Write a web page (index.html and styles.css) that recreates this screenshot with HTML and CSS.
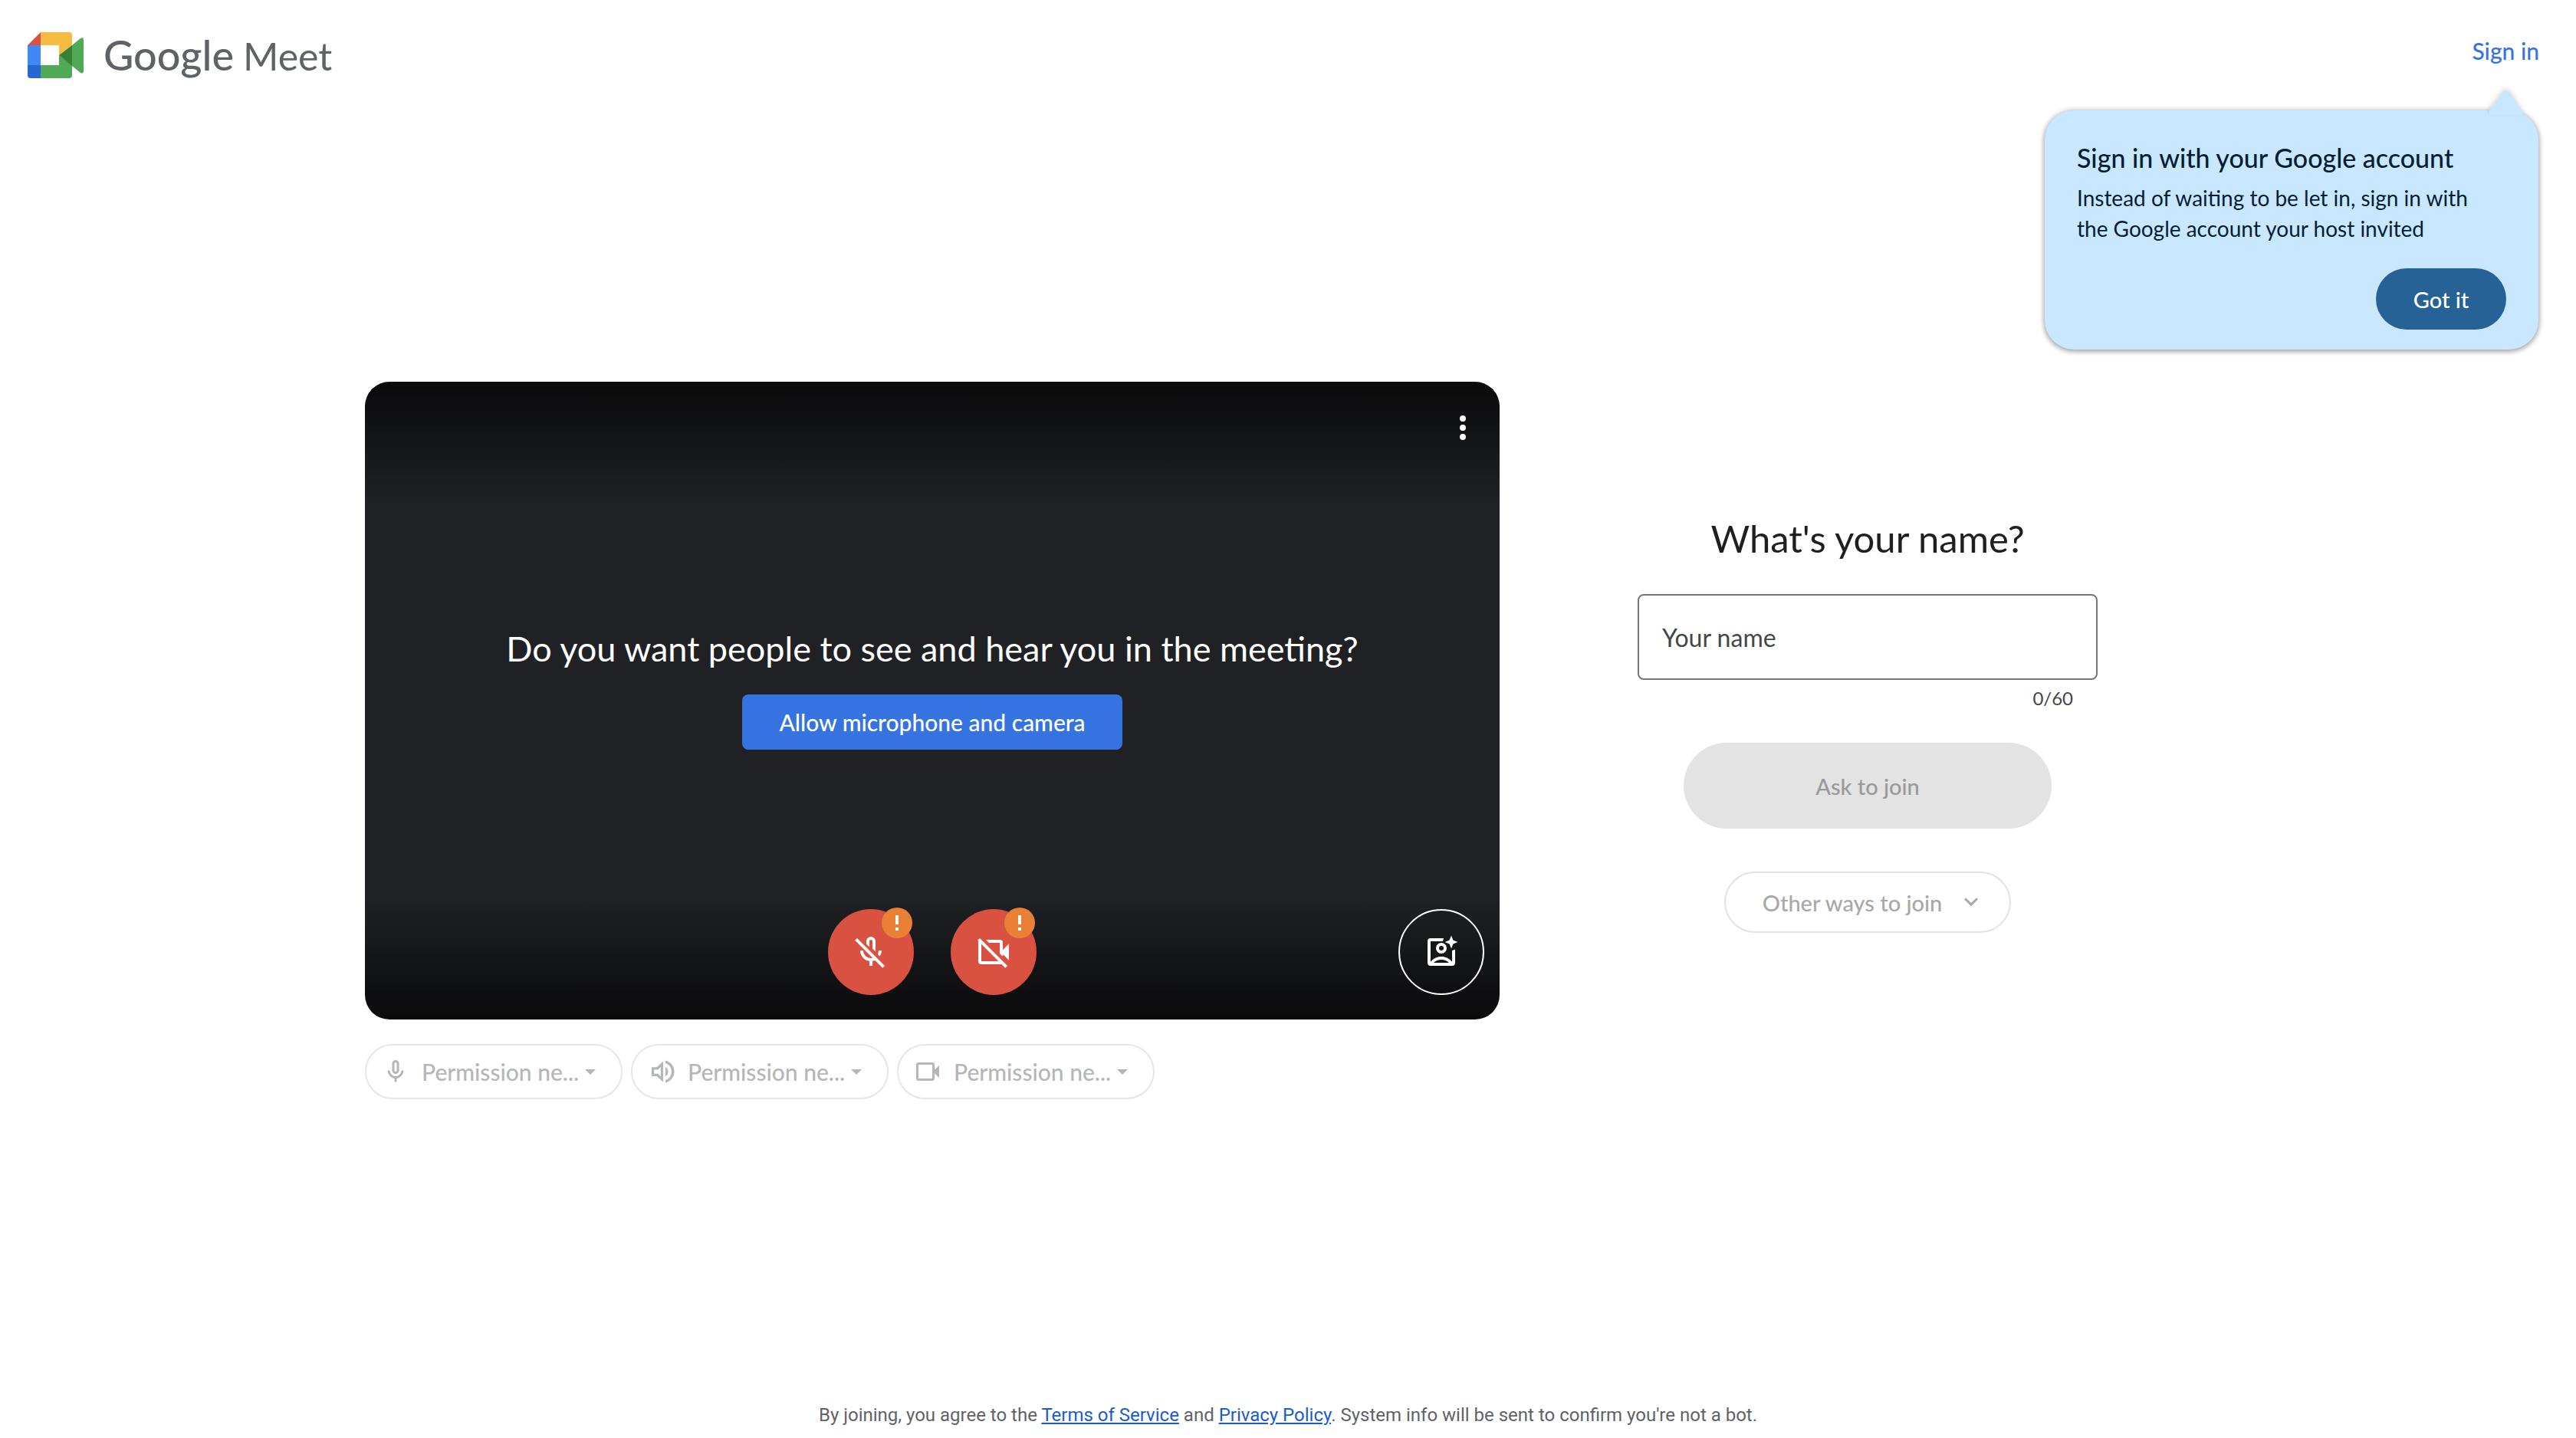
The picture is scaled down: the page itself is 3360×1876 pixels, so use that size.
FILE: index.html
```html
<!DOCTYPE html>
<html lang="en">
<head>
<meta charset="utf-8">
<meta name="viewport" content="width=device-width, initial-scale=1">
<title>Google Meet</title>
<link rel="stylesheet" href="styles.css">
</head>
<body>
<header class="header">
  <div class="logo">
    <svg class="logo-mark" viewBox="0 0 73 60" aria-hidden="true">
      <path fill="#d95140" d="M0 17 17 0v17z"/>
      <path fill="#f6bc42" d="M17 0h37a4 4 0 0 1 4 4v13L41 30V17H17z"/>
      <path fill="#4087f7" d="M0 17h17v26H0z"/>
      <path fill="#2467d3" d="M0 43h17v17H4a4 4 0 0 1-4-4z"/>
      <path fill="#4fa955" d="M17 43h24V30l17 13v13a4 4 0 0 1-4 4H17z"/>
      <path fill="#4fa955" d="M58 17 69 8q4-2 4 2v40q0 5-4 3l-11-9z"/>
      <path fill="#387f38" d="M41 30 58 17v27z"/>
    </svg>
    <div class="wordmark"><span class="brand">Google</span> <span class="product">Meet</span></div>
  </div>
  <a class="sign-in" href="#">Sign in</a>
  <div class="tip" role="dialog" aria-labelledby="tip-title">
    <svg class="tip-arrow" viewBox="0 0 44 32" aria-hidden="true"><path d="M0 26 15 5q7-9 13 0l15 23v4H0z"/></svg>
    <h2 class="tip-title" id="tip-title">Sign in with your Google account</h2>
    <p class="tip-text">Instead of waiting to be let in, sign in with the Google account your host invited</p>
    <button class="tip-button" type="button">Got it</button>
  </div>
</header>

<main class="main">
  <section class="preview">
    <div class="stage">
      <div class="stage-top">
        <button class="more" type="button" aria-label="More options">
          <svg class="icon" viewBox="0 0 24 24"><circle cx="12" cy="6" r="2"/><circle cx="12" cy="12" r="2"/><circle cx="12" cy="18" r="2"/></svg>
        </button>
      </div>
      <div class="stage-prompt">
        <p class="question">Do you want people to see and hear you in the meeting?</p>
        <button class="allow" type="button">Allow microphone and camera</button>
      </div>
      <div class="stage-controls">
        <div class="toggles">
          <button class="round off" type="button" aria-label="Turn on microphone">
            <svg class="icon" viewBox="0 0 24 24">
              <path d="M9 6.8V5a3 3 0 0 1 6 0v6.8l-2-2V5a1 1 0 0 0-2 0v3.8z"/>
              <path d="M17 11h2c0 1.4-.5 2.7-1.5 3.8l-1-1.6c.3-.7.5-1.4.5-2.2z"/>
              <path d="M5 11h2a5 5 0 0 0 7.2 4.5l1.5 1.5a7 7 0 0 1-2.7.9V21h-2v-3.1A7 7 0 0 1 5 11z"/>
              <path class="slash" d="M2.3 3.7l18 18"/>
            </svg>
            <svg class="badge" viewBox="0 0 40 40"><circle cx="20" cy="20" r="20"/><path d="M18 10h4v12h-4zM18 26h4v4h-4z"/></svg>
          </button>
          <button class="round off" type="button" aria-label="Turn on camera">
            <svg class="icon" viewBox="0 0 24 24">
              <path d="M7 4h9a2 2 0 0 1 2 2v4.600l4-4v10.800l-3.600-3.600-.6 1-1.800-1.800V6H9z"/>
              <path d="M2 5l2-.4V18h12l2 1.400a2 2 0 0 1-1.500.6H4a2 2 0 0 1-2-2z"/>
              <path class="slash" d="M2.3 3.7l18 18"/>
            </svg>
            <svg class="badge" viewBox="0 0 40 40"><circle cx="20" cy="20" r="20"/><path d="M18 10h4v12h-4zM18 26h4v4h-4z"/></svg>
          </button>
        </div>
        <button class="round effects" type="button" aria-label="Apply visual effects">
          <svg class="icon" viewBox="0 0 24 24">
            <path d="M13.500 3H5a2 2 0 0 0-2 2v14a2 2 0 0 0 2 2h14a2 2 0 0 0 2-2v-8.600l-2 .6v7.400C17.300 16.300 14.800 15 12 15s-5.300 1.300-7 3.400V5h8zM7 19c1.300-1.200 3-2 5-2s3.700.8 5 2z"/>
            <path fill-rule="evenodd" d="M12 6a3.500 3.500 0 1 0 0 7 3.500 3.500 0 0 0 0-7zm0 2a1.500 1.500 0 1 1 0 3 1.500 1.500 0 0 1 0-3z"/>
            <path d="M18.500 1.300l1.200 3 3 1.200-3 1.200-1.200 3-1.200-3-3-1.200 3-1.200z"/>
          </svg>
        </button>
      </div>
    </div>
    <div class="devices">
      <button class="chip" type="button" disabled>
        <svg class="chip-icon" viewBox="0 0 24 24"><path d="M12 14c1.660 0 3-1.340 3-3V5a3 3 0 0 0-6 0v6c0 1.660 1.340 3 3 3zM11 5a1 1 0 0 1 2 0v6a1 1 0 0 1-2 0zM17 11a5 5 0 0 1-10 0H5a7 7 0 0 0 6 6.920V21h2v-3.080A7 7 0 0 0 19 11z"/></svg>
        <span>Permission ne...</span>
        <svg class="caret" viewBox="0 0 14 7"><path d="M0 0h14L7 7z"/></svg>
      </button>
      <button class="chip" type="button" disabled>
        <svg class="chip-icon" viewBox="0 0 24 24"><path fill-rule="evenodd" d="M3.300 8.200v7.800h4.600l5.400 5.200V3L7.900 8.200zM11.200 8v8.200L8.800 13.900H5.400v-3.600h3.400z"/><path d="M15.300 7.800a5 5 0 0 1 0 8.500zM15.300 2.400a9.900 9.900 0 0 1 0 19.300v-2.300a7.700 7.700 0 0 0 0-14.700z"/></svg>
        <span>Permission ne...</span>
        <svg class="caret" viewBox="0 0 14 7"><path d="M0 0h14L7 7z"/></svg>
      </button>
      <button class="chip" type="button" disabled>
        <svg class="chip-icon" viewBox="0 0 24 24"><path d="M18 10.500V6a2 2 0 0 0-2-2H4a2 2 0 0 0-2 2v12a2 2 0 0 0 2 2h12a2 2 0 0 0 2-2v-4.500l4 4v-11zM16 18H4V6h12z"/></svg>
        <span>Permission ne...</span>
        <svg class="caret" viewBox="0 0 14 7"><path d="M0 0h14L7 7z"/></svg>
      </button>
    </div>
  </section>

  <form class="join">
    <h1 class="join-title"><label for="name">What's your name?</label></h1>
    <input class="name" id="name" type="text" maxlength="60" placeholder="Your name">
    <p class="counter">0/60</p>
    <button class="ask" type="submit" disabled>Ask to join</button>
    <button class="other" type="button" disabled>
      <span>Other ways to join</span>
      <svg class="chevron" viewBox="0 0 24 24"><path d="M6.700 8.800 12 14.100l5.300-5.300"/></svg>
    </button>
  </form>
</main>

<footer class="footer">
  <p>By joining, you agree to the <a href="#">Terms of Service</a> and <a href="#">Privacy Policy</a>. System info will be sent to confirm you're not a bot.</p>
</footer>
</body>
</html>
```
FILE: styles.css
```css
* {
  box-sizing: border-box;
}

body {
  margin: 0;
  min-height: 100vh;
  display: flex;
  flex-direction: column;
  background: #fff;
  color: #1f1f1f;
  font-family: Lato, "Liberation Sans", sans-serif;
  font-size: 28px;
}

h1, h2, p {
  margin: 0;
  font-weight: 400;
}

button {
  padding: 0;
  border: 0;
  background: none;
  color: inherit;
  font: inherit;
  font-weight: 500;
}

/* Header */

.header {
  position: relative;
  height: 128px;
  padding: 42px 48px 0 36px;
  display: flex;
  justify-content: space-between;
  align-items: flex-start;
}

.logo {
  display: flex;
  align-items: flex-start;
  gap: 26px;
}

.logo-mark {
  width: 73px;
  height: 60px;
}

.wordmark {
  display: flex;
  align-items: baseline;
  gap: 12px;
  line-height: 60px;
  color: #5f6368;
  white-space: nowrap;
}

.brand {
  font-size: 54px;
  font-weight: 500;
}

.product {
  font-size: 50px;
}

.sign-in {
  color: #3574e0;
  font-size: 30px;
  font-weight: 500;
  line-height: 48px;
  text-decoration: none;
}

.tip {
  position: absolute;
  z-index: 1;
  top: 144px;
  right: 49px;
  width: 644px;
  padding: 42px 42px 26px;
  display: flex;
  flex-direction: column;
  border-radius: 38px;
  background: #c9e7fe;
  color: #041e35;
  box-shadow: 0 2px 6px 1px rgba(0, 0, 0, .3), 0 0 8px rgba(0, 0, 0, .12);
}

.tip-arrow {
  position: absolute;
  top: -26px;
  right: 20px;
  width: 44px;
  height: 32px;
  fill: #c9e7fe;
  filter: drop-shadow(0 -3px 3px rgba(0, 0, 0, .15));
}

.tip-title {
  font-size: 34px;
  font-weight: 500;
  line-height: 40px;
}

.tip-text {
  max-width: 540px;
  margin-top: 12px;
  line-height: 40px;
}

.tip-button {
  align-self: flex-end;
  width: 170px;
  height: 80px;
  margin-top: 32px;
  border-radius: 40px;
  background: #276296;
  color: #fff;
  font-size: 29px;
}

/* Main */

.main {
  flex: 1;
  width: 100%;
  max-width: 2408px;
  margin: 0 auto;
  display: grid;
  grid-template-columns: minmax(0, 1480fr) minmax(0, 896fr);
  gap: 32px;
  align-content: center;
}

.stage {
  min-height: 832px;
  display: grid;
  grid-template-rows: auto 1fr auto;
  border-radius: 32px;
  background:
    linear-gradient(to bottom, rgba(0, 0, 0, .7), transparent 160px),
    linear-gradient(to top, rgba(0, 0, 0, .7), transparent 160px),
    #202124;
  color: #fff;
}

.icon {
  width: 48px;
  height: 48px;
  fill: currentColor;
}

.stage-top {
  padding-top: 12px;
  display: flex;
  justify-content: flex-end;
}

.more {
  width: 96px;
  height: 96px;
  display: grid;
  place-items: center;
}

.stage-prompt {
  padding-top: 4px;
  display: flex;
  flex-direction: column;
  align-items: center;
  justify-content: center;
  gap: 32px;
  text-align: center;
}

.question {
  font-size: 45px;
  line-height: 56px;
}

.allow {
  height: 72px;
  padding: 0 48px;
  border-radius: 8px;
  background: #3574e0;
  font-size: 30px;
}

.stage-controls {
  padding: 0 20px 32px;
  display: grid;
  grid-template-columns: 1fr auto 1fr;
}

.toggles {
  grid-column: 2;
  display: flex;
  gap: 48px;
}

.round {
  position: relative;
  width: 112px;
  height: 112px;
  display: grid;
  place-items: center;
  border-radius: 50%;
}

.off {
  background: #d95140;
}

.slash {
  fill: none;
  stroke: currentColor;
  stroke-width: 2;
}

.badge {
  position: absolute;
  top: -2px;
  right: 2px;
  width: 40px;
  height: 40px;
  fill: #fff;
}

.badge circle {
  fill: #e98036;
}

.effects {
  justify-self: end;
  border: 2px solid #fff;
}

/* Device pickers */

.devices {
  margin-top: 32px;
  display: flex;
  gap: 11px;
}

.chip {
  width: 336px;
  height: 72px;
  padding: 0 20px;
  display: flex;
  align-items: center;
  border: 2px solid #e6e6e6;
  border-radius: 36px;
  color: #b5b6b8;
  font-size: 30px;
}

.chip-icon {
  width: 36px;
  height: 36px;
  margin-right: 16px;
  fill: currentColor;
}

.caret {
  width: 14px;
  height: 7px;
  margin-left: 8px;
  fill: currentColor;
}

/* Join form */

.join {
  padding-top: 172px;
  display: flex;
  flex-direction: column;
  align-items: center;
}

.join-title {
  font-size: 49px;
  line-height: 64px;
}

.name {
  width: 600px;
  height: 112px;
  margin-top: 41px;
  padding: 0 30px;
  border: 2px solid #747775;
  border-radius: 8px;
  color: #1f1f1f;
  font: inherit;
  font-size: 32px;
}

.name::placeholder {
  color: #444746;
  opacity: 1;
}

.counter {
  width: 600px;
  margin-top: 12px;
  padding-right: 32px;
  color: #444746;
  font-size: 24px;
  line-height: 24px;
  text-align: right;
}

.ask {
  width: 480px;
  height: 112px;
  margin-top: 46px;
  border-radius: 56px;
  background: #e3e3e3;
  color: #999;
  font-size: 29px;
}

.other {
  height: 80px;
  margin-top: 56px;
  padding: 0 32px 0 48px;
  display: flex;
  align-items: center;
  gap: 20px;
  border: 2px solid #e3e3e3;
  border-radius: 40px;
  color: #a8a8a8;
  font-size: 29px;
}

.chevron {
  width: 36px;
  height: 36px;
  fill: none;
  stroke: currentColor;
  stroke-width: 2;
}

/* Footer */

.footer {
  padding: 26px 24px 14px;
  color: #5f6368;
  font-family: Roboto, "Liberation Sans", sans-serif;
  font-size: 24px;
  line-height: 32px;
  text-align: center;
}

.footer a {
  color: #1a5bcf;
}
```
